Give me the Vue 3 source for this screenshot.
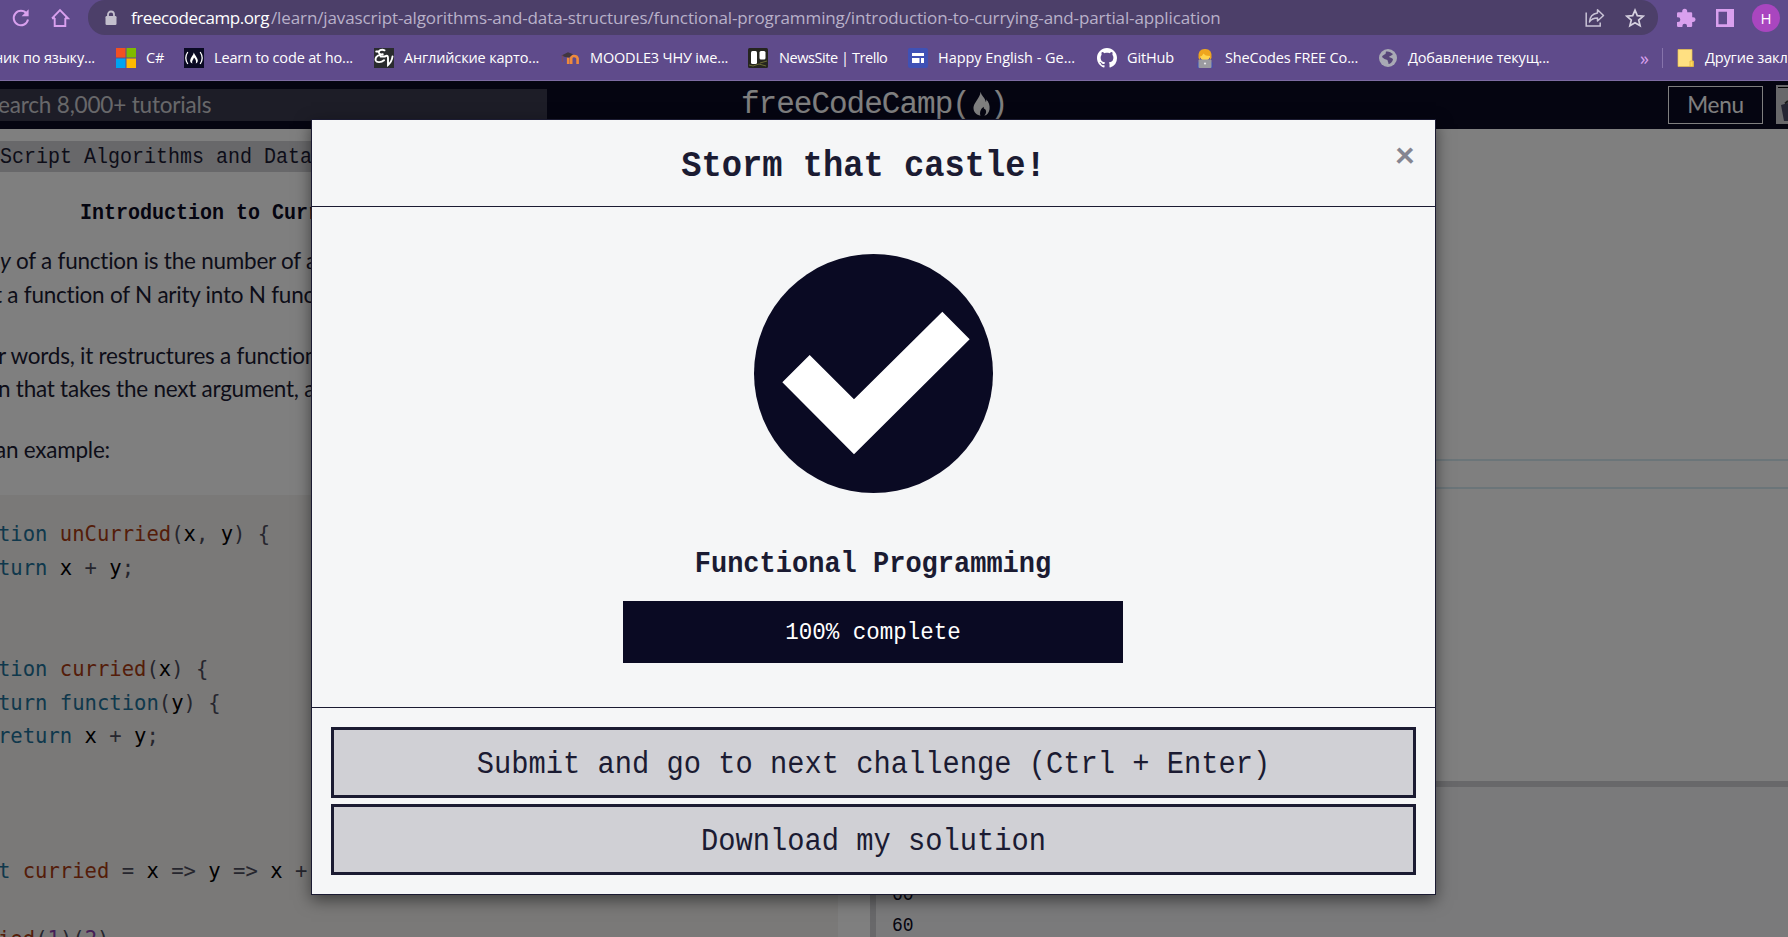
<script setup>
const bookmarks = [
  { icon: 'none', label: 'ник по языку...' },
  { icon: 'ms', label: 'C#' },
  { icon: 'fcc', label: 'Learn to code at ho...' },
  { icon: 'ev', label: 'Английские карто...' },
  { icon: 'moodle', label: 'MOODLE3 ЧНУ іме...' },
  { icon: 'trello', label: 'NewsSite | Trello' },
  { icon: 'happy', label: 'Happy English - Ge...' },
  { icon: 'github', label: 'GitHub' },
  { icon: 'she', label: 'SheCodes FREE Co...' },
  { icon: 'globe', label: 'Добавление текущ...' },
]
const code = [
  [['k', 'tion '], ['f', 'unCurried'], ['p', '('], ['v', 'x'], ['p', ', '], ['v', 'y'], ['p', ') {']],
  [['k', 'turn '], ['v', 'x '], ['p', '+ '], ['v', 'y'], ['p', ';']],
  [],
  [],
  [['k', 'tion '], ['f', 'curried'], ['p', '('], ['v', 'x'], ['p', ') {']],
  [['k', 'turn '], ['k', 'function'], ['p', '('], ['v', 'y'], ['p', ') {']],
  [['k', 'return '], ['v', 'x '], ['p', '+ '], ['v', 'y'], ['p', ';']],
  [],
  [],
  [],
  [['k', 't '], ['f', 'curried '], ['p', '= '], ['v', 'x '], ['p', '=> '], ['v', 'y '], ['p', '=> '], ['v', 'x '], ['p', '+']],
  [],
  [['f', 'ied'], ['p', '('], ['n', '1'], ['p', ')('], ['n', '2'], ['p', ')']],
]
</script>

<template>
  <div class="screen">
    <header class="browser">
      <div class="toolbar">
        <svg class="tb reload" viewBox="0 0 20 20"><path d="M15.6 5.6A7.2 7.2 0 1 0 17 11.5" fill="none" stroke="#d9a0ee" stroke-width="2" /><path d="M17.6 1.2v7h-7z" fill="#d9a0ee" /></svg>
        <svg class="tb home" viewBox="0 0 20 20"><path d="M4.700 10V18h10.600V10M2 10.300 10 2l8 8.300h-3M5 10.300H2" fill="none" stroke="#d9a0ee" stroke-width="1.900" /></svg>
        <div class="address">
          <svg class="lock" viewBox="0 0 12 16"><path d="M3 7V4.500a3 3 0 0 1 6 0V7" fill="none" stroke="#c3bfcd" stroke-width="1.800" /><rect x="0.500" y="6" width="11" height="9" rx="1.200" fill="#c3bfcd" /></svg>
          <span class="host">freecodecamp.org</span><span class="path">/learn/javascript-algorithms-and-data-structures/functional-programming/introduction-to-currying-and-partial-application</span>
          <svg class="share" viewBox="0 0 20 20" fill="none" stroke="#c9c3d6" stroke-width="1.500"><path d="M1.200 4.500V18h14V14.500" /><path d="M12.500 1.800 18.500 7.500 12.500 13V10c-4 0-6.500 1.300-8 4 .3-5 3-8.300 8-9z" stroke-linejoin="round" /></svg>
          <svg class="star" viewBox="0 0 20 20"><path d="M10 2.200 12.300 7.600 18.200 8.100 13.700 12 15.100 17.800 10 14.700 4.900 17.800 6.300 12 1.800 8.100 7.700 7.600z" fill="none" stroke="#d5d0df" stroke-width="1.700" /></svg>
        </div>
        <svg class="ext" viewBox="0 0 20 20"><path d="M1 5.500Q1 4.300 2.200 4.300H6.200V3.200a2.500 2.500 0 0 1 5 0V4.300H15q1.200 0 1.200 1.200V9.200h1a2.300 2.300 0 0 1 0 4.700h-1v3.900q0 1.200-1.200 1.200H11v-1a2.300 2.300 0 0 0-4.600 0v1H2.200Q1 19 1 17.800V14h1a2.300 2.300 0 0 0 0-4.700H1z" fill="#d9a0ee" /></svg>
        <svg class="panel" viewBox="0 0 18 18"><path fill-rule="evenodd" d="M0 0h18v18H0zM2.500 2.800v12.400h8.500V2.800z" fill="#d9a0ee" /></svg>
        <span class="profile">H</span>
      </div>
      <nav class="bookmarks">
        <div v-for="b in bookmarks" :key="b.label" class="bm" :class="b.icon">
          <svg v-if="b.icon === 'ms'" viewBox="0 0 20 20"><path fill="#f25022" d="M0 0h9.500v9.500H0z" /><path fill="#7fba00" d="M10.500 0H20v9.500h-9.500z" /><path fill="#00a4ef" d="M0 10.500h9.500V20H0z" /><path fill="#ffb900" d="M10.500 10.500H20V20h-9.500z" /></svg>
          <svg v-else-if="b.icon === 'fcc'" viewBox="0 0 20 20"><path fill="#0a0a23" d="M0 0h20v20H0z" /><path d="M3.800 4Q-.2 10 3.800 16M16.200 4q4 6 0 12" fill="none" stroke="#fff" stroke-width="1.300" /><path d="M9.800 4.500c.5 2 4 5.500 4 8 0 1.500-.8 2.700-2 3 .6-2 .2-4-1.800-6-.8 2.500-2.600 3.500-1.500 6-1.500-.4-2.500-1.500-2.300-3.300C6.500 9.500 9.600 7 9.800 4.500z" fill="#fff" /></svg>
          <svg v-else-if="b.icon === 'ev'" viewBox="0 0 20 20"><path fill="#2a2c2f" d="M0 0h20v20H0z" /><path d="M10.500 2.300C7.500.8 4 2.600 5 5c.6 1.400 2.500 1.500 3.800 1.200M6.500 6.600C3 7.200.8 10 1.800 12.600c1 2.300 5.500 2 8.200-.4M2.200 3.500h3M6.500 8.500h4M11 8.500c2-1.600 3-.6 3 1.500v7c2.300-2 4-4.500 4.500-8.500" fill="none" stroke="#fff" stroke-width="1.900" stroke-linecap="round" /></svg>
          <svg v-else-if="b.icon === 'moodle'" viewBox="0 0 20 20"><path d="M8.200 16V9.500M11.200 16V10.500q0-2.500 2.900-2.500T17.600 10.500V16" fill="none" stroke="#ef8a3c" stroke-width="2.600" /><path d="M1.500 7.500 8 4.200 13 6.200 9 9.500 5 9z" fill="#40363f" /><path d="M2.500 7.500v6.500" stroke="#7b4a5f" stroke-width="1.400" /></svg>
          <svg v-else-if="b.icon === 'trello'" viewBox="0 0 20 20"><rect width="20" height="20" rx="1.500" fill="#25251f" /><path d="M1 17l4 1 6-2 7 2M12 15l7-2" stroke="#6a6b35" stroke-width="1" fill="none" /><rect x="3" y="3" width="6" height="13" rx="1.500" fill="#fff" /><rect x="11.500" y="3" width="6" height="8.500" rx="1.500" fill="#fff" /></svg>
          <svg v-else-if="b.icon === 'happy'" viewBox="0 0 20 20"><rect width="20" height="20" rx="2" fill="#3f51b5" /><path d="M4 5h12v3H4zM4 10h7.500v5H4zM13 10h3v5h-3z" fill="#fff" /></svg>
          <svg v-else-if="b.icon === 'github'" viewBox="0 0 16 16"><path fill="#fff" d="M8 0C3.580 0 0 3.580 0 8c0 3.540 2.290 6.530 5.470 7.590.4.070.55-.17.55-.38 0-.19-.01-.82-.01-1.490-2.010.37-2.530-.49-2.690-.94-.09-.23-.48-.94-.82-1.130-.28-.15-.68-.52-.01-.53.63-.01 1.080.58 1.230.82.72 1.210 1.870.87 2.330.66.070-.52.28-.87.51-1.070-1.780-.2-3.640-.89-3.640-3.950 0-.87.31-1.590.82-2.150-.08-.2-.36-1.020.08-2.120 0 0 .67-.21 2.200.82.640-.18 1.320-.27 2-.27s1.360.09 2 .27c1.530-1.040 2.200-.82 2.200-.82.440 1.100.160 1.920.080 2.120.510.560.820 1.270.820 2.150 0 3.070-1.870 3.750-3.650 3.950.290.250.540.730.540 1.480 0 1.070-.010 1.930-.010 2.200 0 .210.150.460.550.380A8.010 8.010 0 0 0 16 8c0-4.420-3.580-8-8-8z" /></svg>
          <svg v-else-if="b.icon === 'she'" viewBox="0 0 20 20"><path d="M2.500 20v-5q1-3 7.500-3t7.500 3v5z" fill="#3c4fb8" /><circle cx="10" cy="7" r="5.500" fill="#ffd34d" /><path d="M3.500 10Q2.500 1 10 1t6.500 9L15 12V8Q10 8 8.500 5.500 7.500 8 5 8.500V12z" fill="#eea51f" /><rect x="3.500" y="11.500" width="13" height="8.500" rx="1" fill="#9b9ba0" /><circle cx="10" cy="15.500" r="1.100" fill="#e8e8ea" /></svg>
          <svg v-else-if="b.icon === 'globe'" viewBox="0 0 20 20"><circle cx="10" cy="10" r="9" fill="#a9aab5" /><path d="M8 3.500c3-.5 5 1 7 2.500-1 2-3.500 1.500-4 3 1.500 1 3.500.5 4 2.500-.5 2.500-3 4.500-4.500 4.500 0-2-1-2.500-1-4-2-.5-4-1.500-5.500-3C4.500 7 6 7 7.500 6z" fill="#574679" /></svg>
          <span>{{ b.label }}</span>
        </div>
        <span class="more">»</span>
        <div class="bm others">
          <svg viewBox="0 0 20 20"><path d="M2 1.500h14v11.500h1.500v5.500H2z" fill="#ffe082" stroke="#e9c14e" stroke-width="0.700" /><path d="M14 18.500v-5.500h3v5.500z" fill="#ffd95a" stroke="#d9a93a" stroke-width="0.600" /></svg>
          <span>Другие закл</span>
        </div>
      </nav>
    </header>

    <main class="site">
      <div class="navbar">
        <div class="search"><span>earch 8,000+ tutorials</span></div>
        <div class="logo">
          <span class="word">freeCodeCamp(</span>
          <svg viewBox="0 0 18 26"><path d="M8 0c1 5 5 6 5.500 11 .8-.8.7-2 .3-3C17 11 18 15 17.500 18.500 17 22 15 24.500 12 25.500c2.500-3 2.500-5.500.5-7.500-1 .6-1.200-.5-1-2-3 1.500-5 6-3.500 9.500C3.500 24.500.5 21.500.5 17 .6 11.500 7.500 7 8 0z" /></svg>
          <span class="word">)</span>
        </div>
        <button class="menu">Menu</button>
        <div class="avatar"><svg viewBox="0 0 12 39"><path d="M2 2h10v1H2z" fill="#000" /><path d="M5 20l7-2v18H8z" fill="#4a4a66" /><path d="M9 18.500 12 16" stroke="#333" stroke-width="2" /></svg></div>
      </div>

      <div class="work">
        <section class="lesson">
          <div class="crumb"><span class="mono">Script Algorithms and Data</span></div>
          <h1><span class="mono">Introduction to Cur</span><span class="mono">r</span></h1>
          <p class="p1"><span><i>y</i> of a function is the number of a</span><br /><span class="l2">t a function of N arity into N func</span></p>
          <p class="p2"><span>r words, it restructures a function</span><br /><span>n that takes the next argument, a</span></p>
          <p class="p3">an example:</p>
          <pre><div v-for="(line, i) in code" :key="i" class="line"><span v-for="(t, j) in line" :key="j" :class="t[0]">{{ t[1] }}</span></div></pre>
        </section>
        <div class="split"></div>
        <section class="right">
          <div class="editor"><div class="active"></div></div>
          <div class="console"><span class="mono">60</span><span class="mono">60</span></div>
        </section>
      </div>

      <div class="backdrop">
        <div class="modal">
          <div class="head"><h2><span class="mono">Storm that castle!</span></h2><button class="close">×</button></div>
          <div class="body">
            <svg class="check" viewBox="0 0 717 717"><circle cx="358.500" cy="358.500" r="358.500" fill="#0a0a23" /><path d="M565 173 647 256 300 601 85 385 167 303 300 436z" fill="#fff" /></svg>
            <h3><span class="mono">Functional Programming</span></h3>
            <div class="bar"><span class="mono">100% complete</span></div>
          </div>
          <div class="foot">
            <button class="cta"><span class="mono">Submit and go to next challenge (Ctrl + Enter)</span></button>
            <button class="cta"><span class="mono">Download my solution</span></button>
          </div>
        </div>
      </div>
    </main>
  </div>
</template>

<style>
body { margin: 0; overflow: hidden; }
</style>

<style scoped>
* { box-sizing: border-box; }
.screen { width: 1788px; height: 937px; overflow: hidden; display: flex; flex-direction: column; font-family: "Lato", sans-serif; }
h1, h2, h3, p, pre { margin: 0; }
button { font: inherit; padding: 0; }
.crumb, h1, h2, h3, .bar, .cta, .mono { font-family: "Liberation Mono", monospace; }
.mono { display: inline-block; white-space: pre; transform: scaleY(1.1); transform-origin: 50% 66%; }

.browser { height: 81px; flex: none; background: #5f4b8b; border-bottom: 1px solid #7d6ca2; font-family: "Open Sans", sans-serif; }
.toolbar { height: 35px; display: flex; align-items: center; }
.tb { width: 20px; height: 20px; flex: none; }
.reload { margin-left: 11px; }
.home { margin-left: 19px; }
.address { margin-left: 18px; width: 1570px; height: 35px; flex: none; background: #4c3f69; border-radius: 17px; display: flex; align-items: center; font-size: 17px; color: #b9b1c9; white-space: pre; }
.lock { width: 12px; height: 16px; margin: 0 14px 0 17px; flex: none; }
.host { color: #fff; letter-spacing: -0.420px; width: 140px; flex: none; }
.path { letter-spacing: -0.110px; width: 1314px; flex: none; }
.share { width: 20px; height: 20px; flex: none; }
.star { width: 20px; height: 20px; margin-left: 20px; flex: none; }
.ext { width: 20px; height: 20px; margin-left: 18px; }
.panel { width: 18px; height: 18px; margin-left: 20px; }
.profile { width: 28px; height: 28px; border-radius: 50%; background: #a946bf; color: #fff; margin-left: 18px; text-align: center; font-size: 15px; line-height: 28px; }
.bookmarks { height: 45px; display: grid; grid-template-columns: 116px 68px 190px 186px 189px 160px 188px 98px 183px 262px 22px 1fr; align-items: center; font-size: 14.500px; color: #fff; white-space: nowrap; }
.bm { display: flex; align-items: center; letter-spacing: -0.160px; }
.bm svg { width: 20px; height: 20px; margin-right: 10px; flex: none; }
.bm.none { justify-content: flex-end; width: 95px; }
.bm.trello { letter-spacing: -0.430px; }
.bm.trello svg { margin-left: -1px; margin-right: 11px; }
.bm.happy { letter-spacing: -0.040px; }
.bm.happy svg { margin-left: -1px; }
.more { color: #d9a0ee; font-size: 18px; line-height: 20px; }
.others { border-left: 1px solid #8673ab; height: 20px; padding-left: 13px; }
.others svg { margin-right: 9px; }

.site { flex: 1; min-height: 0; position: relative; display: flex; flex-direction: column; background: #fff; overflow: hidden; }
.navbar { height: 48px; flex: none; background: #0a0a23; display: flex; align-items: flex-start; overflow: hidden; }
.search { width: 547px; flex: none; height: 32px; margin-top: 8px; background: #3b3b4f; color: #d0d0d5; font-size: 22.500px; line-height: 31px; white-space: nowrap; letter-spacing: -0.180px; }
.search span { margin-left: -2px; }
.logo { margin: 8px 0 0 194px; width: 268px; flex: none; display: flex; height: 34px; color: #fff; }
.word { font: 31px/32px "Liberation Mono", monospace; letter-spacing: -1px; }
.logo svg { width: 17px; height: 26px; margin: 2px 0 0 3px; flex: none; fill: #fff; }
.menu { margin: 5px 0 0 659px; width: 95px; height: 38px; flex: none; border: 1px solid #fff; background: #0a0a23; color: #fff; font-size: 22.500px; line-height: 36px; letter-spacing: -0.300px; }
.avatar { margin: 4px 0 0 13px; width: 12px; height: 39px; background: #d0d0d5; flex: none; overflow: hidden; }
.avatar svg { width: 12px; height: 39px; display: block; }

.work { flex: 1; min-height: 0; display: flex; }
.lesson { width: 870px; flex: none; overflow: hidden; color: #1b1b32; white-space: nowrap; }
.crumb { margin-top: 12px; height: 31px; background: #d0d0d5; font-size: 20px; line-height: 34px; }
h1 { margin: 27px 0 0 80px; height: 30px; font-size: 20px; line-height: 30px; color: #0a0a23; }
p { font-size: 22.500px; line-height: 33.750px; letter-spacing: -0.240px; }
.p1 { margin-top: 15px; }
.p2, .p3 { margin-top: 27px; }
.p2 { margin-left: -2px; }
.p3 { margin-left: -5px; }
.l2 { margin-left: -6px; }
pre { margin-top: 28px; padding: 23px 0 0 0; height: 460px; width: 838px; background: #f5f2f0; font: 20.550px/33.750px "DejaVu Sans Mono", monospace; }
.line { height: 33.750px; margin-left: -2px; }
.k { color: #207098; }
.f { color: #a83b12; }
.p { color: #4c4c5c; }
.v { color: #000; }
.n { color: #8a3fae; }
.split { width: 6px; background: #d0d0d5; flex: none; }
.right { flex: 1; display: flex; flex-direction: column; }
.editor { height: 652px; flex: none; padding-top: 330px; }
.active { height: 30px; border: solid #d6eaf2; border-width: 2px 0; }
.console { flex: 1; border-top: 6px solid #d0d0d5; background: #f5f5f6; padding: 93px 0 0 16px; display: flex; flex-direction: column; align-items: flex-start; font-size: 18px; line-height: 31px; color: #0a0a23; }

.backdrop { position: absolute; inset: 0; background: rgba(0, 0, 0, 0.5); }
.modal { position: absolute; left: 311px; top: 38px; width: 1125px; height: 776px; background: #f5f6f7; border: 1px solid #1b1b32; box-shadow: 0 5px 15px rgba(0, 0, 0, 0.5); color: #1b1b32; }
.head { height: 87px; border-bottom: 1px solid #1b1b32; position: relative; text-align: center; }
h2 { font-size: 33.750px; line-height: 44px; padding: 25px 20px 0 0; }
.close { position: absolute; right: 15px; top: 16px; width: 30px; height: 34px; border: 0; background: none; color: #858591; font: 900 35px/34px "Lato", sans-serif; }
.body { height: 501px; border-bottom: 1px solid #1b1b32; display: flex; flex-direction: column; align-items: center; padding: 47px 1px 0 0; }
.check { width: 239px; height: 239px; flex: none; }
h3 { font-size: 27px; line-height: 40px; height: 40px; margin-top: 52px; }
.bar { width: 500px; height: 62px; margin-top: 16px; background: #0a0a23; color: #fff; text-align: center; font-size: 22.500px; line-height: 67px; }
.foot { padding: 19px 19px 0; display: flex; flex-direction: column; gap: 6px; }
.cta { height: 71px; border: 3px solid #1b1b32; background: #d0d0d5; color: #1b1b32; font-size: 28.750px; line-height: 59px; padding-top: 6px; }
</style>
